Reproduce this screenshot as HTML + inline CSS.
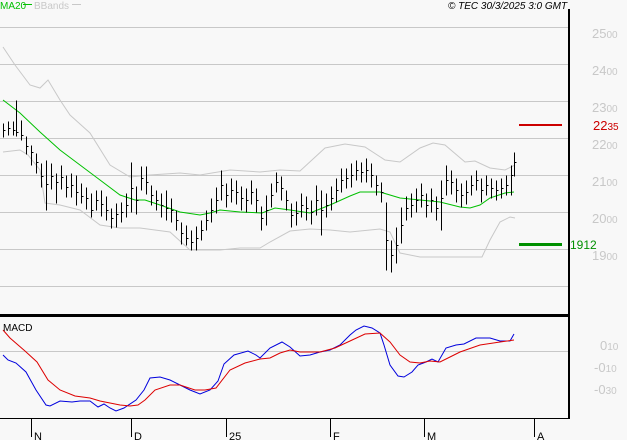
<!DOCTYPE html>
<html><head><meta charset="utf-8"><style>
body{margin:0;background:#f8f8f8;width:627px;height:440px;overflow:hidden;font-family:"Liberation Sans",sans-serif}
svg{display:block}
</style></head><body>
<svg width="627" height="440" viewBox="0 0 627 440" xmlns="http://www.w3.org/2000/svg">
<rect width="627" height="440" fill="#f8f8f8"/>
<g stroke="#c8c8c8" stroke-width="1">
<path d="M0 27.5H569M0 64.5H569M0 101.5H569M0 138.5H569M0 175.5H569M0 212.5H569M0 249.5H569M0 286.5H569M0 351.5H569"/>
</g>
<g fill="none" stroke="#c8c8c8" stroke-width="1">
<polyline points="3,47 15,65 30,85 40,88 48,80 60,100 70,115 90,133 110,165 130,177 150,175 180,173 200,175 230,170 260,172 280,170 300,171 325,148 345,144 365,147 385,160 400,162 420,148 433,143 445,145 465,162 475,161 490,168 505,170 515,165"/>
<polyline points="3,152 20,150 28,155 40,170 45,203 60,205 80,210 100,225 120,228 140,228 170,232 190,250 220,250 240,248 260,248 270,242 290,231 310,229 330,230 350,232 380,229 390,232 400,253 420,257 440,257 470,257 482,257 490,240 500,222 510,217 515,218"/>
</g>
<polyline fill="none" stroke="#00c000" stroke-width="1" points="3,100 20,113 40,132 60,150 80,165 100,180 120,195 135,200 145,200 160,205 180,212 200,215 210,213 220,210 240,212 262,213 275,208 290,210 310,213 330,205 350,196 360,192 380,192 400,198 420,200 440,202 460,207 470,208 480,205 490,198 505,193 514,192"/>
<path transform="translate(0.5,0.5)" shape-rendering="crispEdges" fill="none" stroke="#000" stroke-width="1" d="M3 123V137M3 130h2M8 121V135M8 128h2M13 121V135M13 130h2M16 100V136M16 132h2M21 120V140M21 135h2M26 136V154M26 146h2M31 145V165M31 152h2M36 153V173M36 162h2M41 163V187M41 176h2M46 160V210M46 184h2M51 163V189M51 176h2M56 173V203M56 182h2M61 165V189M61 177h2M66 175V197M66 187h2M71 173V197M71 185h2M76 175V205M76 192h2M81 183V203M81 196h2M86 187V209M86 198h2M91 193V217M91 210h2M96 190V210M96 200h2M101 190V216M101 204h2M106 196V220M106 210h2M111 208V228M111 218h2M116 203V227M116 214h2M121 202V222M121 212h2M126 193V217M126 205h2M131 162V212M131 188h2M136 186V214M136 200h2M141 166V190M141 178h2M146 166V194M146 182h2M151 185V205M151 195h2M156 190V210M156 200h2M161 193V217M161 205h2M166 190V220M166 208h2M171 198V222M171 210h2M176 210V230M176 220h2M181 222V244M181 233h2M186 225V245M186 238h2M191 230V250M191 242h2M196 226V250M196 238h2M201 220V240M201 230h2M206 210V230M206 220h2M211 198V222M211 210h2M216 187V213M216 200h2M221 170V200M221 185h2M226 183V207M226 195h2M231 178V202M231 190h2M236 180V204M236 192h2M241 186V210M241 198h2M246 188V212M246 200h2M251 180V204M251 192h2M256 188V212M256 200h2M261 206V230M261 218h2M266 195V225M266 210h2M271 183V207M271 195h2M276 172V192M276 182h2M281 176V200M281 188h2M286 190V210M286 200h2M291 203V227M291 215h2M296 201V225M296 213h2M301 193V217M301 205h2M306 196V220M306 208h2M311 200V224M311 212h2M316 185V215M316 200h2M321 190V235M321 210h2M326 193V217M326 205h2M331 186V210M331 198h2M336 178V202M336 190h2M341 168V192M341 180h2M346 168V188M346 178h2M351 163V187M351 175h2M356 160V180M356 170h2M361 162V182M361 172h2M366 158V182M366 170h2M371 163V187M371 175h2M376 175V195M376 185h2M381 182V202M381 192h2M386 202V270M386 240h2M391 240V272M391 255h2M396 227V263M396 245h2M401 207V243M401 225h2M406 196V220M406 208h2M411 193V217M411 205h2M416 188V212M416 200h2M421 183V207M421 195h2M426 193V217M426 205h2M431 188V212M431 200h2M436 196V220M436 208h2M441 180V230M441 198h2M446 165V195M446 180h2M451 170V194M451 182h2M456 178V202M456 190h2M461 183V207M461 195h2M466 180V204M466 192h2M471 175V195M471 185h2M476 170V190M476 180h2M481 178V202M481 190h2M486 175V195M486 185h2M491 178V198M491 188h2M496 180V200M496 190h2M501 178V198M501 188h2M506 175V195M506 185h2M511 165V195M511 175h2M514 152V176M514 162h2"/>
<rect x="519" y="124" width="43" height="2" fill="#cc0000"/>
<rect x="519" y="243" width="43" height="3" fill="#009000"/>
<rect x="0" y="314" width="569" height="3" fill="#000"/>
<rect x="568" y="9" width="2" height="410" fill="#000"/>
<rect x="0" y="418" width="569" height="1" fill="#000"/>
<polyline fill="none" stroke="#0000dd" stroke-width="1" points="3,355 8,360 16,363 26,372 36,390 46,405 50,406 60,401 72,402 80,401 90,401 98,407 104,404 110,408 116,411 124,408 136,400 144,390 150,378 160,377 170,380 180,385 190,390 200,394 210,390 218,381 224,364 234,355 248,351 256,355 260,358 270,348 282,342 290,347 300,356 310,355 320,352 330,350 340,345 350,335 356,330 364,326 372,328 380,333 384,345 390,365 398,376 404,377 412,372 418,365 426,362 432,359 438,362 446,348 456,345 464,344 476,338 490,338 500,341 510,341 514,334"/>
<polyline fill="none" stroke="#dd0000" stroke-width="1" points="3,330 10,338 25,351 37,362 48,380 60,390 75,396 90,398 100,401 120,405 130,406 138,405 145,400 155,390 170,385 180,385 195,390 205,390 216,388 230,370 245,363 260,359 270,358 280,353 290,350 300,352 320,352 335,348 350,341 365,334 380,333 390,342 400,355 410,362 420,363 430,361 440,362 450,357 460,352 480,345 500,342 514,340"/>
<g fill="#000"><rect x="31" y="419" width="1" height="18"/><rect x="131" y="419" width="1" height="18"/><rect x="226" y="419" width="1" height="18"/><rect x="330" y="419" width="1" height="18"/><rect x="424" y="419" width="1" height="18"/><rect x="534" y="419" width="1" height="18"/></g>
<g font-size="11" fill="#000"><text x="34" y="440">N</text><text x="134" y="440">D</text><text x="229" y="440">25</text><text x="333" y="440">F</text><text x="427" y="440">M</text><text x="537" y="440">A</text></g>
<text x="3" y="331" font-size="10" fill="#000">MACD</text>
<text x="0" y="9" font-size="10" fill="#00c000">MA20</text><rect x="23" y="4" width="9" height="1" fill="#00c000"/>
<text x="34" y="9" font-size="10" fill="#c8c8c8">BBands</text><rect x="72" y="4" width="9" height="1" fill="#c8c8c8"/>
<text x="448" y="9" font-size="10" font-style="italic" fill="#000">© TEC 30/3/2025 3:0 GMT</text>
<g font-size="13" fill="#c8c8c8">
<text x="592" y="38">25<tspan font-size="10">00</tspan></text>
<text x="592" y="75">24<tspan font-size="10">00</tspan></text>
<text x="592" y="112">23<tspan font-size="10">00</tspan></text>
<text x="592" y="149">22<tspan font-size="10">00</tspan></text>
<text x="592" y="186">21<tspan font-size="10">00</tspan></text>
<text x="592" y="223">20<tspan font-size="10">00</tspan></text>
<text x="592" y="260">19<tspan font-size="10">00</tspan></text>
<text x="600" y="350">0<tspan font-size="10">10</tspan></text>
<text x="594" y="372">-0<tspan font-size="10">10</tspan></text>
<text x="594" y="394">-0<tspan font-size="10">30</tspan></text>
</g>
<text x="593" y="130" font-size="13" fill="#cc0000">22<tspan font-size="10">35</tspan></text>
<text x="570" y="249" font-size="12" fill="#009000">1912</text>
</svg>
</body></html>
